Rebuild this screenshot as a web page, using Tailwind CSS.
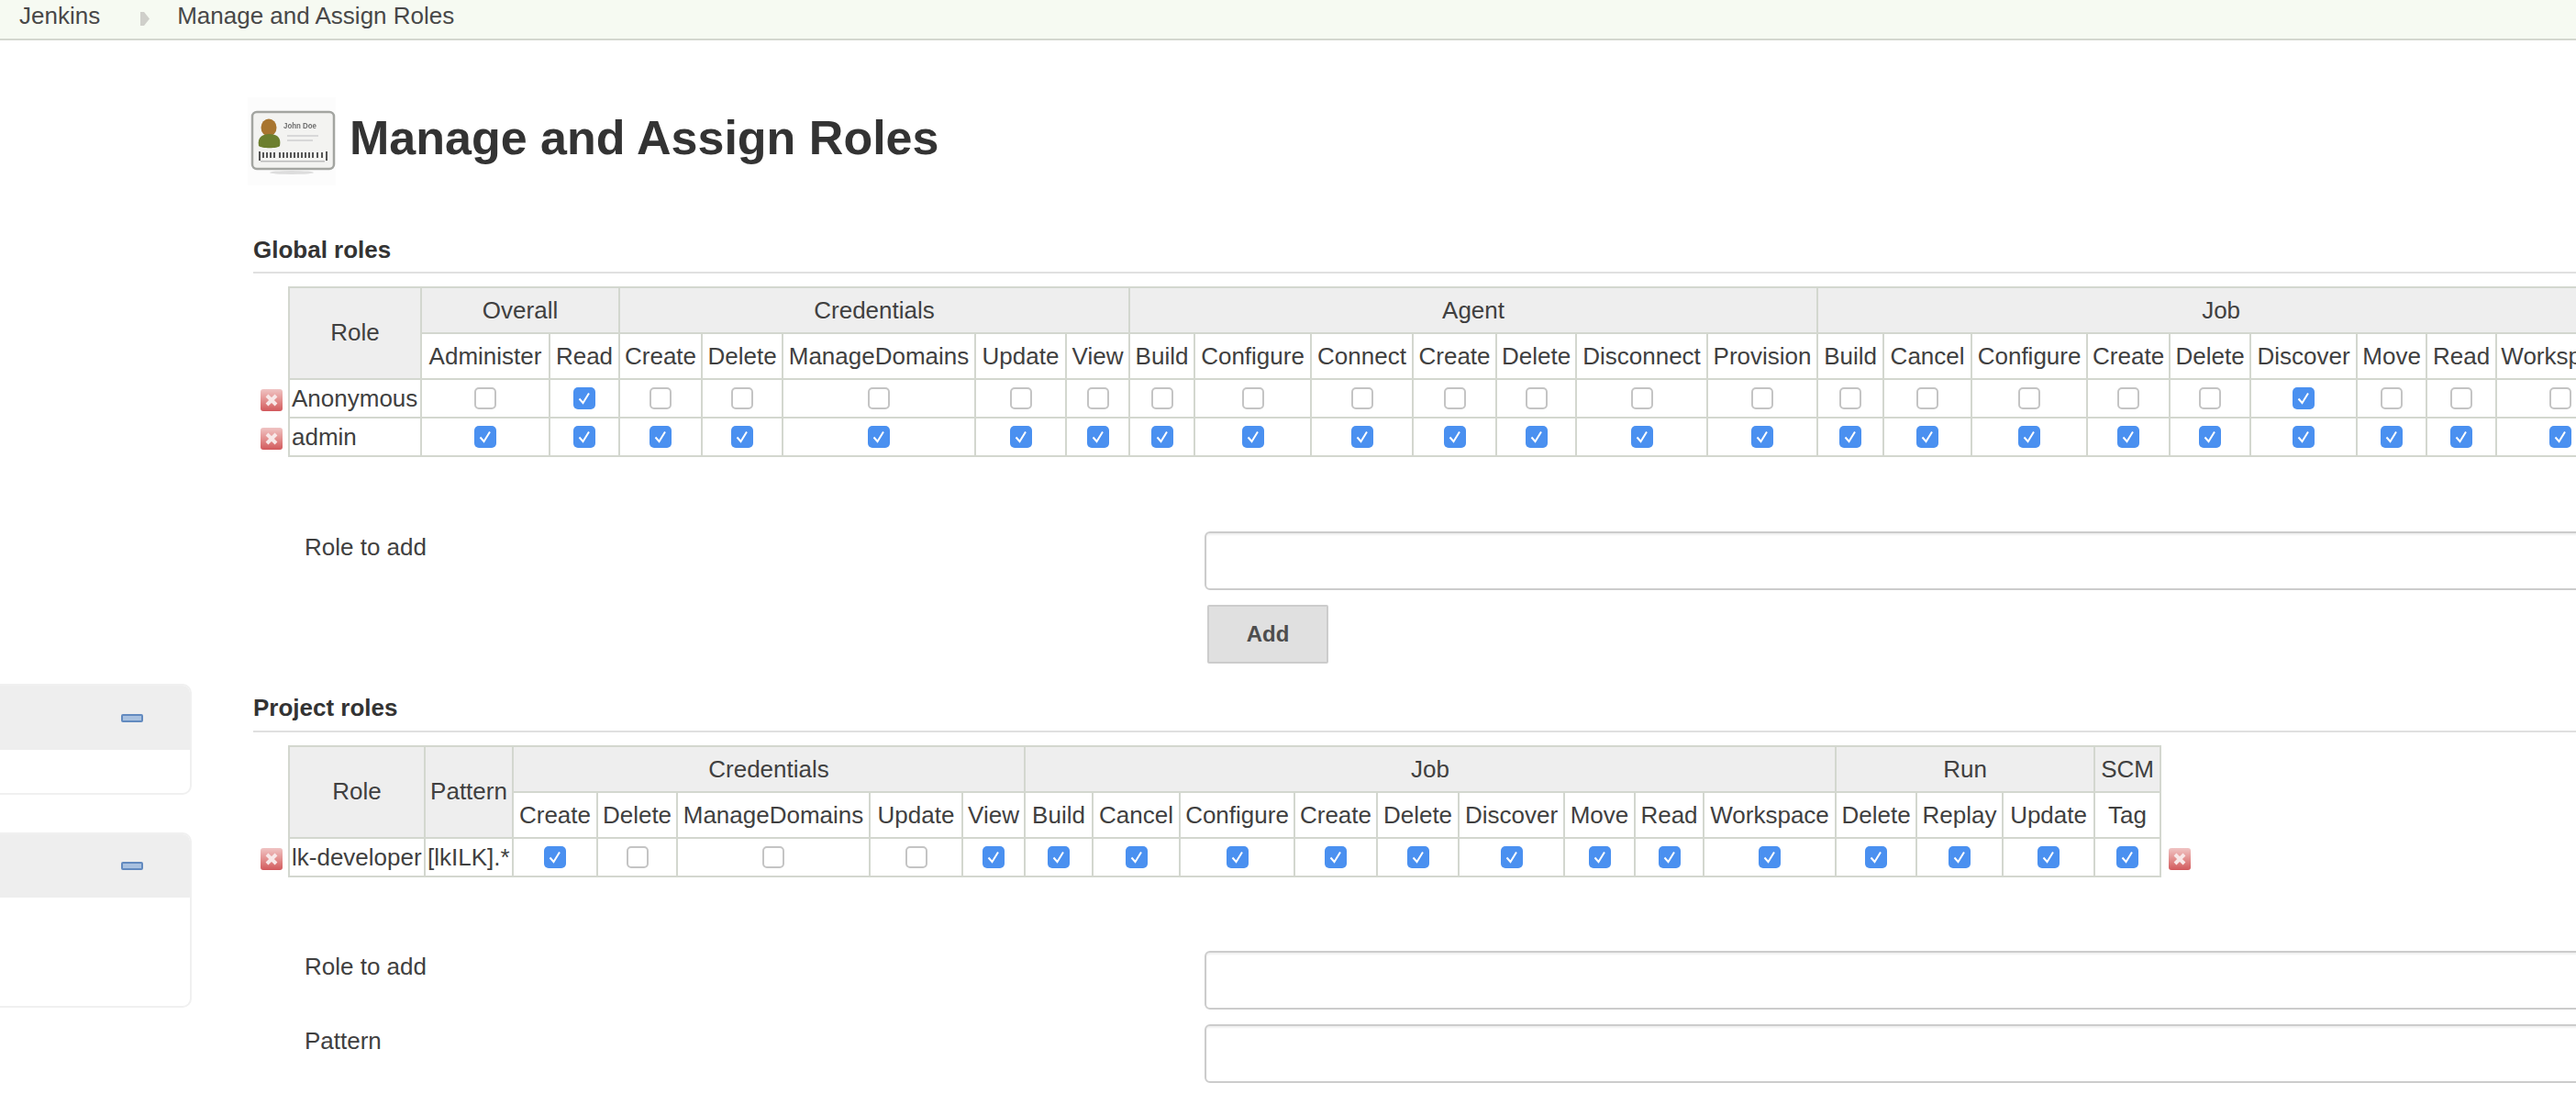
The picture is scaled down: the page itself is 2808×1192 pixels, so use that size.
<!DOCTYPE html>
<html lang="en">
<head>
    <meta charset="UTF-8">
    <title>Manage and Assign Roles</title>
    <script src="https://cdn.jsdelivr.net/npm/@tailwindcss/browser@4"></script>
</head>
<body class="w-[2808px] h-[1192px] overflow-hidden bg-white text-[26px] leading-[30px] text-[#404040] [font-family:'Liberation_Sans',Arial,sans-serif]">

    <!-- Breadcrumb -->
    <div class="h-[44px] bg-[#f6faf2] border-b-2 border-[#d3d7cf] flex items-start pt-[2px] pl-[21px] text-[#484848]">
        <span>Jenkins</span>
        <svg class="ml-[44px] mt-[11px] w-[10px] h-[15px]" viewBox="0 0 10 15"><path d="M0 0 L4 0 L10 7.5 L4 15 L0 15 Z" fill="#cfcfca"/></svg>
        <span class="ml-[30px]">Manage and Assign Roles</span>
    </div>

    <div class="flex">
        <!-- Side panels -->
        <div class="w-[276px] shrink-0 pt-[701px]">
            <div class="w-[209px] h-[121px] rounded-r-[10px] border-2 border-l-0 border-[#f0f0f0]">
                <div class="h-[70px] bg-[#eee] rounded-tr-[8px] flex items-center justify-end pr-[51px]">
                    <div class="w-[24px] h-[9px] rounded-[2px] bg-[#a9c1e0] border-2 border-[#628abf]"></div>
                </div>
            </div>
            <div class="w-[209px] h-[191px] mt-[41px] rounded-r-[10px] border-2 border-l-0 border-[#f0f0f0]">
                <div class="h-[69px] bg-[#eee] rounded-tr-[8px] flex items-center justify-end pr-[51px]">
                    <div class="w-[24px] h-[9px] rounded-[2px] bg-[#a9c1e0] border-2 border-[#628abf]"></div>
                </div>
            </div>
        </div>

        <!-- Main -->
        <div class="w-[2532px] shrink-0">
            <div class="mt-[62px] -ml-[6px] h-[96px] flex items-center">
                <!-- Role card icon -->
                <svg class="w-[96px] h-[96px] shrink-0 blur-[0.5px]" viewBox="0 0 96 96">
                    <rect width="96" height="96" fill="#fcfcfc"/>
                    <ellipse cx="48" cy="82" rx="24" ry="2" fill="#ddd"/>
                    <rect x="5" y="16" width="89" height="62" rx="5" fill="#f3f3f1" stroke="#a3a5a1" stroke-width="2.5"/>
                    <ellipse cx="23" cy="33" rx="8.5" ry="9.5" fill="#a8752f"/>
                    <path d="M12 53 C10 43 17 40 23.500 40 C31 40 37 43 35 53 C33 56 15 56 12 53 Z" fill="#6c7f2e"/>
                    <text x="39" y="34" font-size="9" font-weight="700" fill="#6e6e6e" textLength="36" lengthAdjust="spacingAndGlyphs">John Doe</text>
                    <rect x="43" y="41" width="34" height="2" fill="#d8d8d8"/>
                    <rect x="43" y="46" width="28" height="2" fill="#d8d8d8"/>
                    <path d="M13 59v10M17 60v6M21 60v6M25 60v6M29 60v6M35 60v6M39 60v6M43 60v6M47 60v6M51 60v6M55 60v6M59 60v6M63 60v6M67 60v6M71 60v6M76 60v6M81 60v6M86 59v10" stroke="#555" stroke-width="2"/>
                    <rect x="14" y="69" width="70" height="1.500" fill="#bbb"/>
                </svg>
                <h1 class="ml-[15px] pb-[8px] text-[52px] leading-[60px] font-bold text-[#333]">Manage and Assign Roles</h1>
            </div>

            <h2 class="h-[96px] flex items-end pb-[9px] border-b-2 border-[#e0e0e0] font-bold text-[#333]">Global roles</h2>
            <div id="global-table" class="mt-[14px]"></div>

            <div class="mt-[81px] flex">
                <label class="w-[1037px] pl-[56px] pt-[2px] shrink-0">Role to add</label>
                <input type="text" class="w-[1600px] h-[64px] shrink-0 bg-white border-2 border-[#ccc] rounded-[6px] shadow-[inset_0_2px_2px_#f0f0f0]">
            </div>
            <div class="mt-[16px] ml-[1040px]">
                <button class="w-[132px] h-[64px] bg-[#e0e0e0] border-2 border-[#ccc] rounded-[2px] text-[24px] font-bold text-[#4d4d4d]">Add</button>
            </div>

            <h2 class="h-[75px] flex items-end pb-[10px] border-b-2 border-[#e0e0e0] font-bold text-[#333]">Project roles</h2>
            <div id="project-table" class="mt-[14px]"></div>

            <div class="mt-[80px] flex">
                <label class="w-[1037px] pl-[56px] pt-[2px] shrink-0">Role to add</label>
                <input type="text" class="w-[1600px] h-[64px] shrink-0 bg-white border-2 border-[#ccc] rounded-[6px] shadow-[inset_0_2px_2px_#f0f0f0]">
            </div>
            <div class="mt-[16px] flex">
                <label class="w-[1037px] pl-[56px] pt-[3px] shrink-0">Pattern</label>
                <input type="text" class="w-[1600px] h-[64px] shrink-0 bg-white border-2 border-[#ccc] rounded-[6px] shadow-[inset_0_2px_2px_#f0f0f0]">
            </div>
        </div>
    </div>

    <script>
        const cell = 'border-2 border-[#d3d7cf] p-0 font-normal';
        const head = 'border-2 border-[#d3d7cf] p-0 font-normal text-center bg-[#eee]';
        const leadHead = 'border-2 border-[#d3d7cf] p-0 pb-[3px] font-normal text-center bg-[#eee]';

        const deleteIcon = `
            <div class="mt-[3px] w-[24px] h-[24px] rounded-[3px] bg-linear-to-b from-[#efc4c4] to-[#d1585c] flex items-center justify-center blur-[0.6px]">
                <svg class="w-[14px] h-[14px]" viewBox="0 0 14 14"><path d="M2 2 L12 12 M12 2 L2 12" stroke="#f8e8e8" stroke-width="4"/></svg>
            </div>`;

        const checked = `
            <div class="mx-auto w-[24px] h-[24px] rounded-[5px] bg-[#4a90f0] flex items-center justify-center">
                <svg class="w-[16px] h-[16px]" viewBox="0 0 16 16"><path d="M2.500 8.500 L6.500 13 L13 2.500" fill="none" stroke="#fff" stroke-width="2"/></svg>
            </div>`;
        const unchecked = `<div class="mx-auto w-[24px] h-[24px] rounded-[5px] bg-white border-2 border-[#c4c4c4]"></div>`;

        // edges are the x positions of the column lines, groups are [name, how many columns]
        function buildTable(target, spec) {
            const widths = spec.edges.slice(1).map((x, i) => x - spec.edges[i]);
            const labels = spec.groups.flatMap(g => g.cols);
            let html = `<table class="table-fixed border-collapse" style="width:${spec.edges[spec.edges.length - 1] - 276 + 40}px"><colgroup><col style="width:39px">`;
            widths.forEach(w => { html += `<col style="width:${w}px">`; });
            html += `<col style="width:40px"></colgroup><thead><tr class="h-[50px]"><th rowspan="2"></th>`;
            spec.lead.forEach(name => { html += `<th rowspan="2" class="${leadHead}">${name}</th>`; });
            spec.groups.forEach(g => { html += `<th colspan="${g.cols.length}" class="${head}">${g.name}</th>`; });
            html += `<th rowspan="2"></th></tr><tr class="h-[50px]">`;
            labels.forEach(l => { html += `<th class="${cell}">${l}</th>`; });
            html += `</tr></thead><tbody>`;
            spec.rows.forEach(row => {
                html += `<tr class="h-[42px]"><td class="pl-[8px]">${deleteIcon}</td>`;
                row.lead.forEach(t => { html += `<td class="${cell} pl-[2px] whitespace-nowrap">${t}</td>`; });
                labels.forEach((_, i) => { html += `<td class="${cell}">${row.on(i) ? checked : unchecked}</td>`; });
                html += `<td class="pl-[8px]">${spec.trailing ? deleteIcon : ''}</td></tr>`;
            });
            html += `</tbody></table>`;
            document.getElementById(target).innerHTML = html;
        }

        buildTable('global-table', {
            edges: [315, 459, 599, 675, 765, 853, 1063, 1162, 1231, 1302, 1429, 1540, 1631, 1718, 1861, 1981, 2053, 2149, 2275, 2365, 2453, 2569, 2645, 2721, 2861],
            lead: ['Role'],
            groups: [
                { name: 'Overall', cols: ['Administer', 'Read'] },
                { name: 'Credentials', cols: ['Create', 'Delete', 'ManageDomains', 'Update', 'View'] },
                { name: 'Agent', cols: ['Build', 'Configure', 'Connect', 'Create', 'Delete', 'Disconnect', 'Provision'] },
                { name: 'Job', cols: ['Build', 'Cancel', 'Configure', 'Create', 'Delete', 'Discover', 'Move', 'Read', 'Workspace'] }
            ],
            rows: [
                { lead: ['Anonymous'], on: i => i === 1 || i === 19 },
                { lead: ['admin'], on: () => true }
            ]
        });

        buildTable('project-table', {
            edges: [315, 463, 559, 651, 738, 948, 1049, 1117, 1191, 1286, 1411, 1501, 1590, 1705, 1782, 1857, 2001, 2089, 2183, 2283, 2355],
            lead: ['Role', 'Pattern'],
            trailing: true,
            groups: [
                { name: 'Credentials', cols: ['Create', 'Delete', 'ManageDomains', 'Update', 'View'] },
                { name: 'Job', cols: ['Build', 'Cancel', 'Configure', 'Create', 'Delete', 'Discover', 'Move', 'Read', 'Workspace'] },
                { name: 'Run', cols: ['Delete', 'Replay', 'Update'] },
                { name: 'SCM', cols: ['Tag'] }
            ],
            rows: [
                { lead: ['lk-developer', '[lkILK].*'], on: i => ![1, 2, 3].includes(i) }
            ]
        });
    </script>
</body>
</html>
